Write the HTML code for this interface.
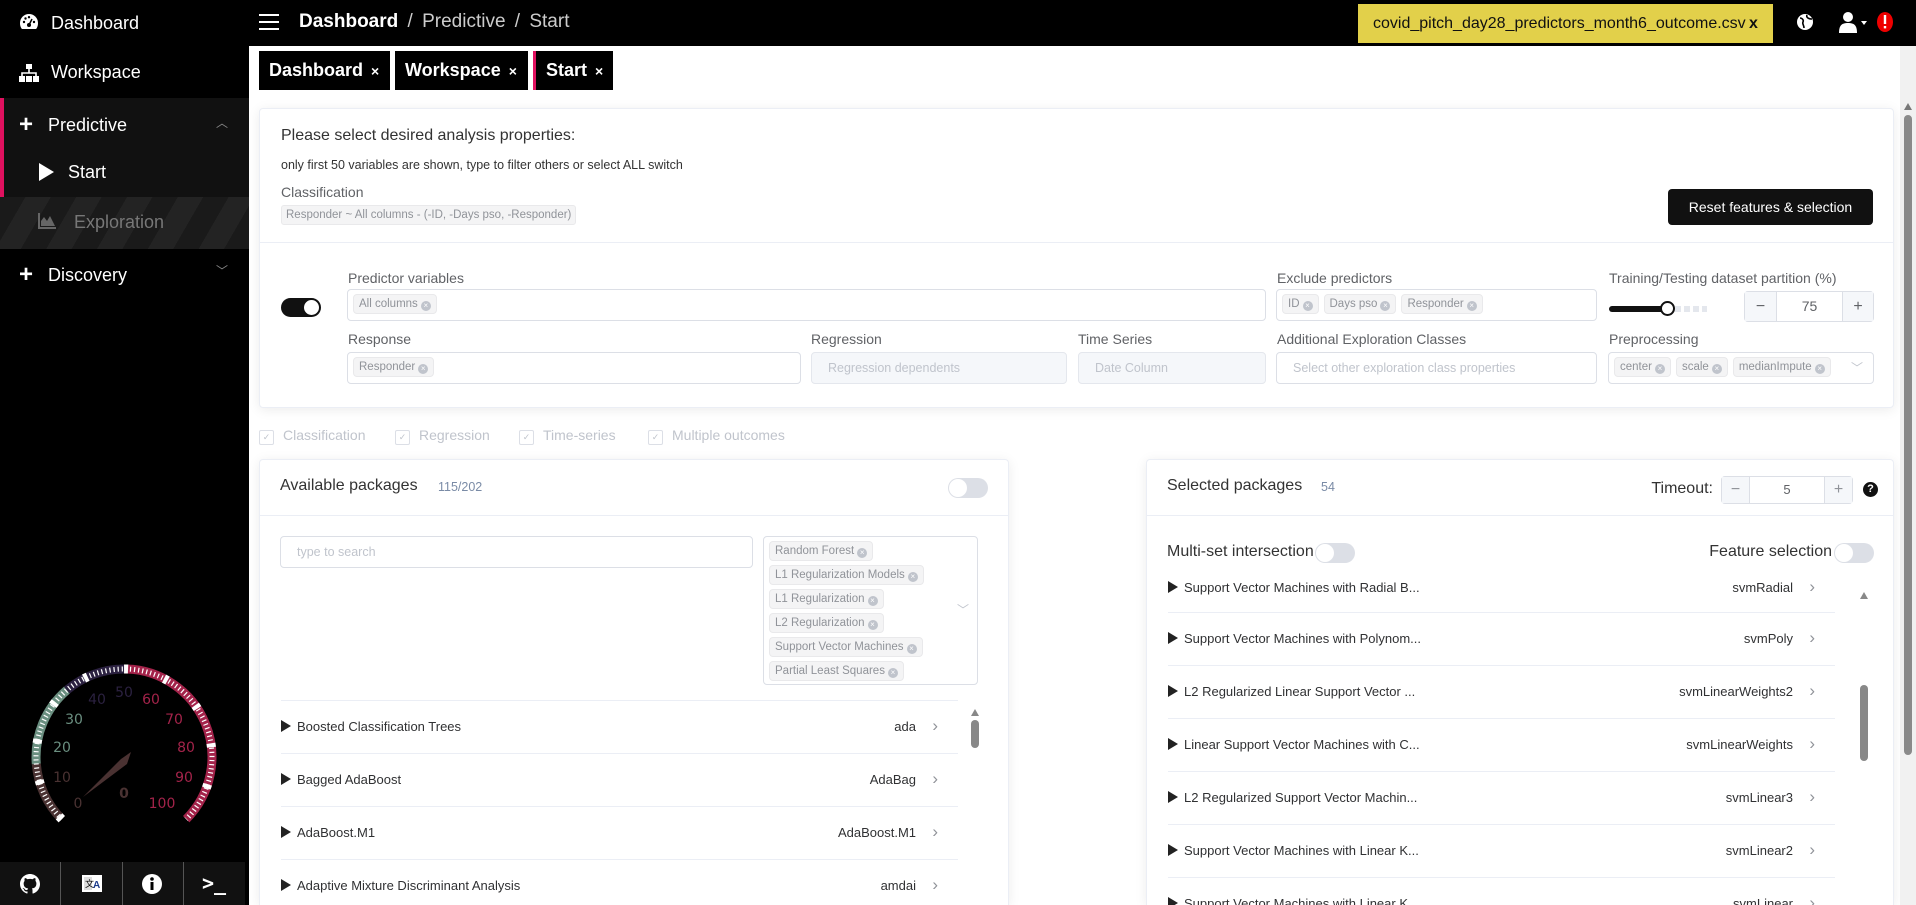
<!DOCTYPE html>
<html><head><meta charset="utf-8">
<style>
*{box-sizing:border-box;margin:0;padding:0}
html{width:1916px;height:905px;overflow:hidden}
body{width:1916px;height:905px;overflow:hidden;background:#fff;font-family:"Liberation Sans",Arial,sans-serif;color:#303133;position:relative}
.a{position:absolute}
#side{left:0;top:0;width:249px;height:905px;background:#000;color:#fff}
.nav{position:absolute;left:51px;font-size:18px;line-height:22px}
#top{left:249px;top:0;width:1667px;height:46px;background:#000}
.tab{position:absolute;top:51px;height:39px;background:#000;color:#fff;font-size:18px;font-weight:600;line-height:39px;padding-left:10px;white-space:nowrap}
.tab span{font-size:14px;margin-left:8px;font-weight:700}
.card{position:absolute;background:#fff;border:1px solid #ebeef5;border-radius:4px;box-shadow:0 2px 12px rgba(0,0,0,.08)}
.lbl{position:absolute;font-size:14px;color:#606266;white-space:nowrap}
.inp{position:absolute;border:1px solid #dcdfe6;border-radius:4px;background:#fff}
.inp.dis{background:#f5f7fa;border-color:#e4e7ed}
.ph{position:absolute;font-size:12.5px;color:#c0c4cc;top:50%;transform:translateY(-50%);left:16px;white-space:nowrap}
.tag{display:inline-block;background:#f4f4f5;border:1px solid #e9e9eb;color:#909399;font-size:11.5px;height:20px;line-height:18px;padding:0 5px;border-radius:4px;margin:4px 0 0 5px;white-space:nowrap}
.tag i{display:inline-block;width:10px;height:10px;border-radius:50%;background:#c0c4cc;color:#fff;font-size:8px;line-height:10px;text-align:center;font-style:normal;margin-left:3px;vertical-align:-1px}
.tog{position:absolute;width:40px;height:20px;border-radius:10px;background:#dcdfe6}
.tog:after{content:"";position:absolute;left:1px;top:1px;width:18px;height:18px;border-radius:50%;background:#fff}
.row{position:absolute;left:21px;height:53px;border-top:1px solid #ebeef5;font-size:13px;color:#303133;white-space:nowrap}
.row .t{position:absolute;left:0;top:18px}
.row .t:before{content:"";display:inline-block;border-left:10px solid #222;border-top:6px solid transparent;border-bottom:6px solid transparent;margin-right:6px;vertical-align:-1px}
.row .c{position:absolute;top:18px}
.row .ch{position:absolute;top:15px;color:#909399;font-size:17px}
.cb{position:absolute;top:427px;font-size:14px;color:#c0c4cc}
.cb:before{content:"✓";display:inline-block;width:13px;height:13px;border:1px solid #dcdfe6;font-size:9px;line-height:12px;text-align:center;margin-right:9px;color:#c0c4cc;border-radius:2px;vertical-align:0}
</style></head><body>

<div id="side" class="a">
  <svg class="a" style="left:19px;top:13px" width="20" height="18" viewBox="0 0 20 18"><path d="M10 1A9 9 0 0 0 1 10c0 3 1 5 2 6h14c1-1 2-3 2-6a9 9 0 0 0-9-9z" fill="#fff"/><circle cx="10" cy="12" r="2" fill="#000"/><path d="M10 12l3-6" stroke="#000" stroke-width="1.5"/><circle cx="5" cy="9" r="1.2" fill="#000"/><circle cx="6.5" cy="5.5" r="1.2" fill="#000"/><circle cx="10" cy="4.2" r="1.2" fill="#000"/><circle cx="15" cy="9" r="1.2" fill="#000"/></svg>
  <div class="nav" style="top:12px">Dashboard</div>
  <svg class="a" style="left:19px;top:64px" width="20" height="18" viewBox="0 0 20 18"><rect x="7" y="0" width="6" height="5" fill="#fff"/><path d="M10 5v4M3 12V9h14v3" stroke="#fff" stroke-width="1.6" fill="none"/><rect x="0" y="12" width="6" height="6" fill="#fff"/><rect x="7" y="12" width="6" height="6" fill="#fff"/><rect x="14" y="12" width="6" height="6" fill="#fff"/></svg>
  <div class="nav" style="top:61px">Workspace</div>
  <div class="a" style="left:0;top:98px;width:249px;height:99px;background:#111;border-left:4px solid #e0115f"></div>
  <div class="a" style="left:19px;top:114px;color:#fff;font-size:24px;font-weight:700;line-height:22px">+</div>
  <div class="nav" style="top:114px;left:48px">Predictive</div>
  <div class="a" style="left:216px;top:114px;color:#888;font-size:12px">︿</div>
  <svg class="a" style="left:39px;top:163px" width="15" height="18"><path d="M0 0L15 9L0 18z" fill="#fff"/></svg>
  <div class="nav" style="top:161px;left:68px">Start</div>
  <div class="a" style="left:0;top:197px;width:249px;height:52px;background:repeating-linear-gradient(120deg,#1a1a1a 0 22px,#232323 22px 44px)"></div>
  <svg class="a" style="left:38px;top:213px" width="18" height="16"><path d="M0 0v16h18v-2H2V0z M3 13V8l3-4 3 4 3-5 3 6 2 4z" fill="#666"/></svg>
  <div class="nav" style="top:211px;left:74px;color:#777">Exploration</div>
  <div class="a" style="left:19px;top:264px;color:#fff;font-size:24px;font-weight:700;line-height:22px">+</div>
  <div class="nav" style="top:264px;left:48px">Discovery</div>
  <div class="a" style="left:216px;top:262px;color:#888;font-size:12px">﹀</div>

  <svg class="a" style="left:0;top:0" width="249" height="905">
    <path d="M61.8 819.2A88 88 0 0 1 36.3 763.9" stroke="#4a3232" stroke-width="9" fill="none"/>
    <path d="M36.3 763.9A88 88 0 0 1 66.9 690.1" stroke="#6a8f80" stroke-width="9" fill="none"/>
    <path d="M66.9 690.1A88 88 0 0 1 124 669" stroke="#2b2140" stroke-width="9" fill="none"/>
    <path d="M124 669A88 88 0 0 1 186.2 819.2" stroke="#a3234a" stroke-width="9" fill="none"/>
    <path d="M61.8 819.2A88 88 0 1 1 186.2 819.2" stroke="#fff" stroke-width="5" fill="none" stroke-dasharray="1.2 2.9"/>
    <path d="M61.8 819.2A88 88 0 1 1 186.2 819.2" stroke="#fff" stroke-width="9" fill="none" stroke-dasharray="4 37.47"/>
    <g font-size="14" text-anchor="middle" font-family="DejaVu Sans,sans-serif">
      <text x="78" y="808" fill="#4a3232">0</text><text x="62" y="782" fill="#4a3232">10</text>
      <text x="62" y="752" fill="#6a8f80">20</text><text x="74" y="724" fill="#6a8f80">30</text>
      <text x="97" y="704" fill="#2b2140">40</text><text x="124" y="697" fill="#2b2140">50</text>
      <text x="151" y="704" fill="#a3234a">60</text><text x="174" y="724" fill="#a3234a">70</text>
      <text x="186" y="752" fill="#a3234a">80</text><text x="184" y="782" fill="#a3234a">90</text>
      <text x="162" y="808" fill="#a3234a">100</text>
      <text x="124" y="798" fill="#4a3232" font-weight="700">0</text>
    </g>
    <path d="M83 797L121 759L131 752L127 764z" fill="#4a3232"/>
  </svg>
  <div class="a" style="left:0;top:862px;width:245px;height:43px;background:#111"></div>
  <div class="a" style="left:60px;top:862px;width:1px;height:43px;background:#555"></div>
  <div class="a" style="left:122px;top:862px;width:1px;height:43px;background:#555"></div>
  <div class="a" style="left:183px;top:862px;width:1px;height:43px;background:#555"></div>
  <svg class="a" style="left:20px;top:874px" width="20" height="20" viewBox="0 0 16 16"><path fill="#fff" d="M8 0C3.58 0 0 3.58 0 8c0 3.54 2.29 6.53 5.47 7.59.4.07.55-.17.55-.38v-1.33c-2.23.48-2.7-1.07-2.7-1.07-.36-.92-.89-1.17-.89-1.17-.73-.5.06-.49.06-.49.8.06 1.23.83 1.23.83.71 1.22 1.87.87 2.33.66.07-.52.28-.87.51-1.07-1.78-.2-3.64-.89-3.64-3.95 0-.87.31-1.59.82-2.15-.08-.2-.36-1.02.08-2.12 0 0 .67-.21 2.2.82.64-.18 1.32-.27 2-.27.68 0 1.36.09 2 .27 1.53-1.04 2.2-.82 2.2-.82.44 1.1.16 1.92.08 2.12.51.56.82 1.27.82 2.15 0 3.07-1.87 3.75-3.65 3.95.29.25.54.73.54 1.48v2.2c0 .21.15.46.55.38A8.013 8.013 0 0016 8c0-4.42-3.58-8-8-8z"/></svg>
  <svg class="a" style="left:81px;top:872px" width="22" height="24"><rect x="1" y="3" width="20" height="17" fill="#fff"/><rect x="3" y="5" width="8" height="13" fill="#ddd"/><text x="4" y="15" font-size="9" fill="#000">文</text><text x="12" y="16" font-size="10" fill="#1a3a8a" font-weight="700">A</text></svg>
  <svg class="a" style="left:142px;top:874px" width="20" height="20"><circle cx="10" cy="10" r="10" fill="#fff"/><rect x="8.5" y="8" width="3" height="8" fill="#000"/><circle cx="10" cy="5" r="1.8" fill="#000"/></svg>
  <div class="a" style="left:202px;top:871px;color:#fff;font-size:20px;font-weight:700;font-family:'DejaVu Sans Mono',monospace">&gt;_</div>
</div>

<div id="top" class="a">
  <div class="a" style="left:10px;top:14px;width:20px;height:2px;background:#fff;box-shadow:0 7px 0 #fff,0 14px 0 #fff"></div>
  <div class="a" style="left:50px;top:11px;font-size:19px;color:#fff;white-space:nowrap"><b>Dashboard</b> <span style="color:#ccc;margin:0 4px">/</span> <span style="color:#ccc">Predictive</span> <span style="color:#ccc;margin:0 4px">/</span> <span style="color:#ccc">Start</span></div>
  <div class="a" style="left:1109px;top:4px;width:415px;height:39px;background:#e2d04a;font-size:16px;line-height:39px;padding-left:15px;color:#111;white-space:nowrap">covid_pitch_day28_predictors_month6_outcome.csv<b style="position:absolute;left:391px">x</b></div>
  <svg class="a" style="left:1547px;top:13px" width="18" height="18"><circle cx="9" cy="9" r="8" fill="#fff"/><path d="M4 5c2 0 4 2 3 4s1 3 1 6M11 2c-1 2 1 4 5 4" stroke="#000" stroke-width="1.6" fill="none"/></svg>
  <svg class="a" style="left:1590px;top:11px" width="30" height="22"><circle cx="9" cy="6" r="5" fill="#fff"/><path d="M0 22c0-8 3-10 9-10s9 2 9 10z" fill="#fff"/><path d="M22 10h6l-3 4z" fill="#fff"/></svg>
  <svg class="a" style="left:1627px;top:11px" width="18" height="22"><ellipse cx="9" cy="11" rx="8" ry="10" fill="#e00"/><rect x="7.8" y="4" width="2.4" height="9" fill="#fff"/><rect x="7.8" y="15" width="2.4" height="2.4" fill="#fff"/></svg>
</div>

<div class="tab" style="left:259px;width:131px">Dashboard<span>×</span></div>
<div class="tab" style="left:395px;width:133px">Workspace<span>×</span></div>
<div class="tab" style="left:533px;width:80px;border-left:3px solid #e0115f">Start<span>×</span></div>

<div class="card" style="left:259px;top:108px;width:1635px;height:300px">
  <div class="a" style="left:21px;top:18px;font-size:16px;color:#333">Please select desired analysis properties:</div>
  <div class="a" style="left:21px;top:49px;font-size:12.5px;color:#333">only first 50 variables are shown, type to filter others or select ALL switch</div>
  <div class="a" style="left:21px;top:75px;font-size:14px;color:#606266">Classification</div>
  <div class="a" style="left:21px;top:96px;height:20px;background:#f4f4f5;border:1px solid #e9e9eb;border-radius:3px;font-size:11.5px;color:#909399;line-height:18px;padding:0 4px;white-space:nowrap">Responder ~ All columns - (-ID, -Days pso, -Responder)</div>
  <div class="a" style="left:1408px;top:80px;width:205px;height:36px;background:#111;border-radius:4px;color:#fff;font-size:14px;line-height:36px;text-align:center">Reset features &amp; selection</div>
  <div class="a" style="left:0;top:133px;width:1633px;height:1px;background:#ebeef5"></div>
  <div class="a" style="left:21px;top:189px;width:40px;height:19px;border-radius:10px;background:#111"><div class="a" style="right:2px;top:2px;width:15px;height:15px;border-radius:50%;background:#fff"></div></div>
  <div class="lbl" style="left:88px;top:161px">Predictor variables</div>
  <div class="inp" style="left:87px;top:180px;width:919px;height:32px"><span class="tag">All columns<i>×</i></span></div>
  <div class="lbl" style="left:1017px;top:161px">Exclude predictors</div>
  <div class="inp" style="left:1016px;top:180px;width:321px;height:32px"><span class="tag">ID<i>×</i></span><span class="tag">Days pso<i>×</i></span><span class="tag">Responder<i>×</i></span></div>
  <div class="lbl" style="left:1349px;top:161px">Training/Testing dataset partition (%)</div>
  <div class="a" style="left:1349px;top:197px;width:58px;height:6px;background:#111;border-radius:3px"></div>
  <div class="a" style="left:1400px;top:192px;width:15px;height:15px;border-radius:50%;background:#fff;border:2px solid #111"></div>
  <div class="a" style="left:1415px;top:197px;width:32px;height:6px;background:repeating-linear-gradient(90deg,#e4e7ed 0 6px,#fff 6px 9px)"></div>
  <div class="inp" style="left:1484px;top:182px;width:130px;height:31px;color:#606266"><div class="a" style="left:0;top:0;width:32px;height:29px;background:#f5f7fa;border-right:1px solid #dcdfe6;text-align:center;line-height:29px">−</div><div class="a" style="left:32px;top:0;width:65px;text-align:center;line-height:29px;font-size:14px">75</div><div class="a" style="right:0;top:0;width:31px;height:29px;background:#f5f7fa;border-left:1px solid #dcdfe6;text-align:center;line-height:29px">+</div></div>
  <div class="lbl" style="left:88px;top:222px">Response</div>
  <div class="inp" style="left:87px;top:243px;width:454px;height:32px"><span class="tag">Responder<i>×</i></span></div>
  <div class="lbl" style="left:551px;top:222px">Regression</div>
  <div class="inp dis" style="left:551px;top:243px;width:256px;height:32px"><span class="ph">Regression dependents</span></div>
  <div class="lbl" style="left:818px;top:222px">Time Series</div>
  <div class="inp dis" style="left:818px;top:243px;width:188px;height:32px"><span class="ph">Date Column</span></div>
  <div class="lbl" style="left:1017px;top:222px">Additional Exploration Classes</div>
  <div class="inp" style="left:1016px;top:243px;width:321px;height:32px"><span class="ph">Select other exploration class properties</span></div>
  <div class="lbl" style="left:1349px;top:222px">Preprocessing</div>
  <div class="inp" style="left:1348px;top:243px;width:266px;height:32px;white-space:nowrap"><span class="tag">center<i>×</i></span><span class="tag">scale<i>×</i></span><span class="tag">medianImpute<i>×</i></span><span class="a" style="right:10px;top:6px;color:#c0c4cc;font-size:12px">﹀</span></div>
</div>

<div class="cb" style="left:259px">Classification</div>
<div class="cb" style="left:395px">Regression</div>
<div class="cb" style="left:519px">Time-series</div>
<div class="cb" style="left:648px">Multiple outcomes</div>

<div class="card" style="left:259px;top:459px;width:750px;height:446px;border-bottom:none;border-radius:4px 4px 0 0;overflow:hidden">
  <div class="a" style="left:20px;top:17px;font-size:16px;color:#333">Available packages</div>
  <div class="a" style="left:178px;top:20px;font-size:12.5px;color:#7a8ba6">115/202</div>
  <div class="tog" style="left:688px;top:18px"></div>
  <div class="a" style="left:0;top:55px;width:748px;height:1px;background:#ebeef5"></div>
  <div class="inp" style="left:20px;top:76px;width:473px;height:32px"><span class="ph">type to search</span></div>
  <div class="inp" style="left:503px;top:76px;width:215px;height:149px;padding-top:0">
    <span class="tag">Random Forest<i>×</i></span><br><span class="tag">L1 Regularization Models<i>×</i></span><br><span class="tag">L1 Regularization<i>×</i></span><br><span class="tag">L2 Regularization<i>×</i></span><br><span class="tag">Support Vector Machines<i>×</i></span><br><span class="tag">Partial Least Squares<i>×</i></span>
    <span class="a" style="right:8px;top:64px;color:#c0c4cc;font-size:12px">﹀</span></div>
  <div class="row" style="top:240px;width:677px"><span class="t">Boosted Classification Trees</span><span class="c" style="right:42px">ada</span><span class="ch" style="right:20px">›</span></div>
  <div class="row" style="top:293px;width:677px"><span class="t">Bagged AdaBoost</span><span class="c" style="right:42px">AdaBag</span><span class="ch" style="right:20px">›</span></div>
  <div class="row" style="top:346px;width:677px"><span class="t">AdaBoost.M1</span><span class="c" style="right:42px">AdaBoost.M1</span><span class="ch" style="right:20px">›</span></div>
  <div class="row" style="top:399px;width:677px"><span class="t">Adaptive Mixture Discriminant Analysis</span><span class="c" style="right:42px">amdai</span><span class="ch" style="right:20px">›</span></div>
  <div class="a" style="left:711px;top:249px;border-bottom:7px solid #888;border-left:4px solid transparent;border-right:4px solid transparent"></div>
  <div class="a" style="left:711px;top:260px;width:8px;height:28px;border-radius:4px;background:#888"></div>
</div>

<div class="card" style="left:1146px;top:459px;width:748px;height:446px;border-bottom:none;border-radius:4px 4px 0 0;overflow:hidden">
  <div class="a" style="left:20px;top:17px;font-size:16px;color:#333">Selected packages</div>
  <div class="a" style="left:174px;top:20px;font-size:12.5px;color:#7a8ba6">54</div>
  <div class="a" style="right:180px;top:20px;font-size:16px;color:#333">Timeout:</div>
  <div class="inp" style="left:574px;top:16px;width:132px;height:28px;color:#909399"><div class="a" style="left:0;top:0;width:28px;height:26px;background:#f5f7fa;border-right:1px solid #dcdfe6;text-align:center;line-height:26px">−</div><div class="a" style="left:28px;top:0;width:74px;text-align:center;line-height:26px;font-size:13px;color:#606266">5</div><div class="a" style="right:0;top:0;width:28px;height:26px;background:#f5f7fa;border-left:1px solid #dcdfe6;text-align:center;line-height:26px">+</div></div>
  <div class="a" style="left:716px;top:22px;width:15px;height:15px;border-radius:50%;background:#111;color:#fff;font-size:11px;font-weight:700;text-align:center;line-height:15px">?</div>
  <div class="a" style="left:0;top:55px;width:746px;height:1px;background:#ebeef5"></div>
  <div class="a" style="left:20px;top:83px;font-size:16px;color:#333;white-space:nowrap">Multi-set intersection</div>
  <div class="tog" style="left:168px;top:83px"></div>
  <div class="a" style="right:61px;top:83px;font-size:16px;color:#333;white-space:nowrap">Feature selection</div>
  <div class="tog" style="left:687px;top:83px"></div>
  <div class="a" style="left:0;top:118px;width:746px;height:350px;overflow:hidden">
    <div class="row" style="top:-16px;width:667px;border-top:none"><span class="t">Support Vector Machines with Radial B...</span><span class="c" style="right:42px">svmRadial</span><span class="ch" style="right:20px">›</span></div>
    <div class="row" style="top:34px;width:667px"><span class="t">Support Vector Machines with Polynom...</span><span class="c" style="right:42px">svmPoly</span><span class="ch" style="right:20px">›</span></div>
    <div class="row" style="top:87px;width:667px"><span class="t">L2 Regularized Linear Support Vector ...</span><span class="c" style="right:42px">svmLinearWeights2</span><span class="ch" style="right:20px">›</span></div>
    <div class="row" style="top:140px;width:667px"><span class="t">Linear Support Vector Machines with C...</span><span class="c" style="right:42px">svmLinearWeights</span><span class="ch" style="right:20px">›</span></div>
    <div class="row" style="top:193px;width:667px"><span class="t">L2 Regularized Support Vector Machin...</span><span class="c" style="right:42px">svmLinear3</span><span class="ch" style="right:20px">›</span></div>
    <div class="row" style="top:246px;width:667px"><span class="t">Support Vector Machines with Linear K...</span><span class="c" style="right:42px">svmLinear2</span><span class="ch" style="right:20px">›</span></div>
    <div class="row" style="top:299px;width:667px"><span class="t">Support Vector Machines with Linear K...</span><span class="c" style="right:42px">svmLinear</span><span class="ch" style="right:20px">›</span></div>
  </div>
  <div class="a" style="left:713px;top:132px;border-bottom:7px solid #888;border-left:4px solid transparent;border-right:4px solid transparent"></div>
  <div class="a" style="left:713px;top:225px;width:8px;height:76px;border-radius:4px;background:#888"></div>
</div>

<div class="a" style="left:1900px;top:46px;width:16px;height:859px;background:#f1f1f1"></div>
<div class="a" style="left:1904px;top:103px;border-bottom:7px solid #777;border-left:4px solid transparent;border-right:4px solid transparent"></div>
<div class="a" style="left:1904px;top:115px;width:8px;height:640px;border-radius:4px;background:#8a8a8a"></div>
</body></html>
